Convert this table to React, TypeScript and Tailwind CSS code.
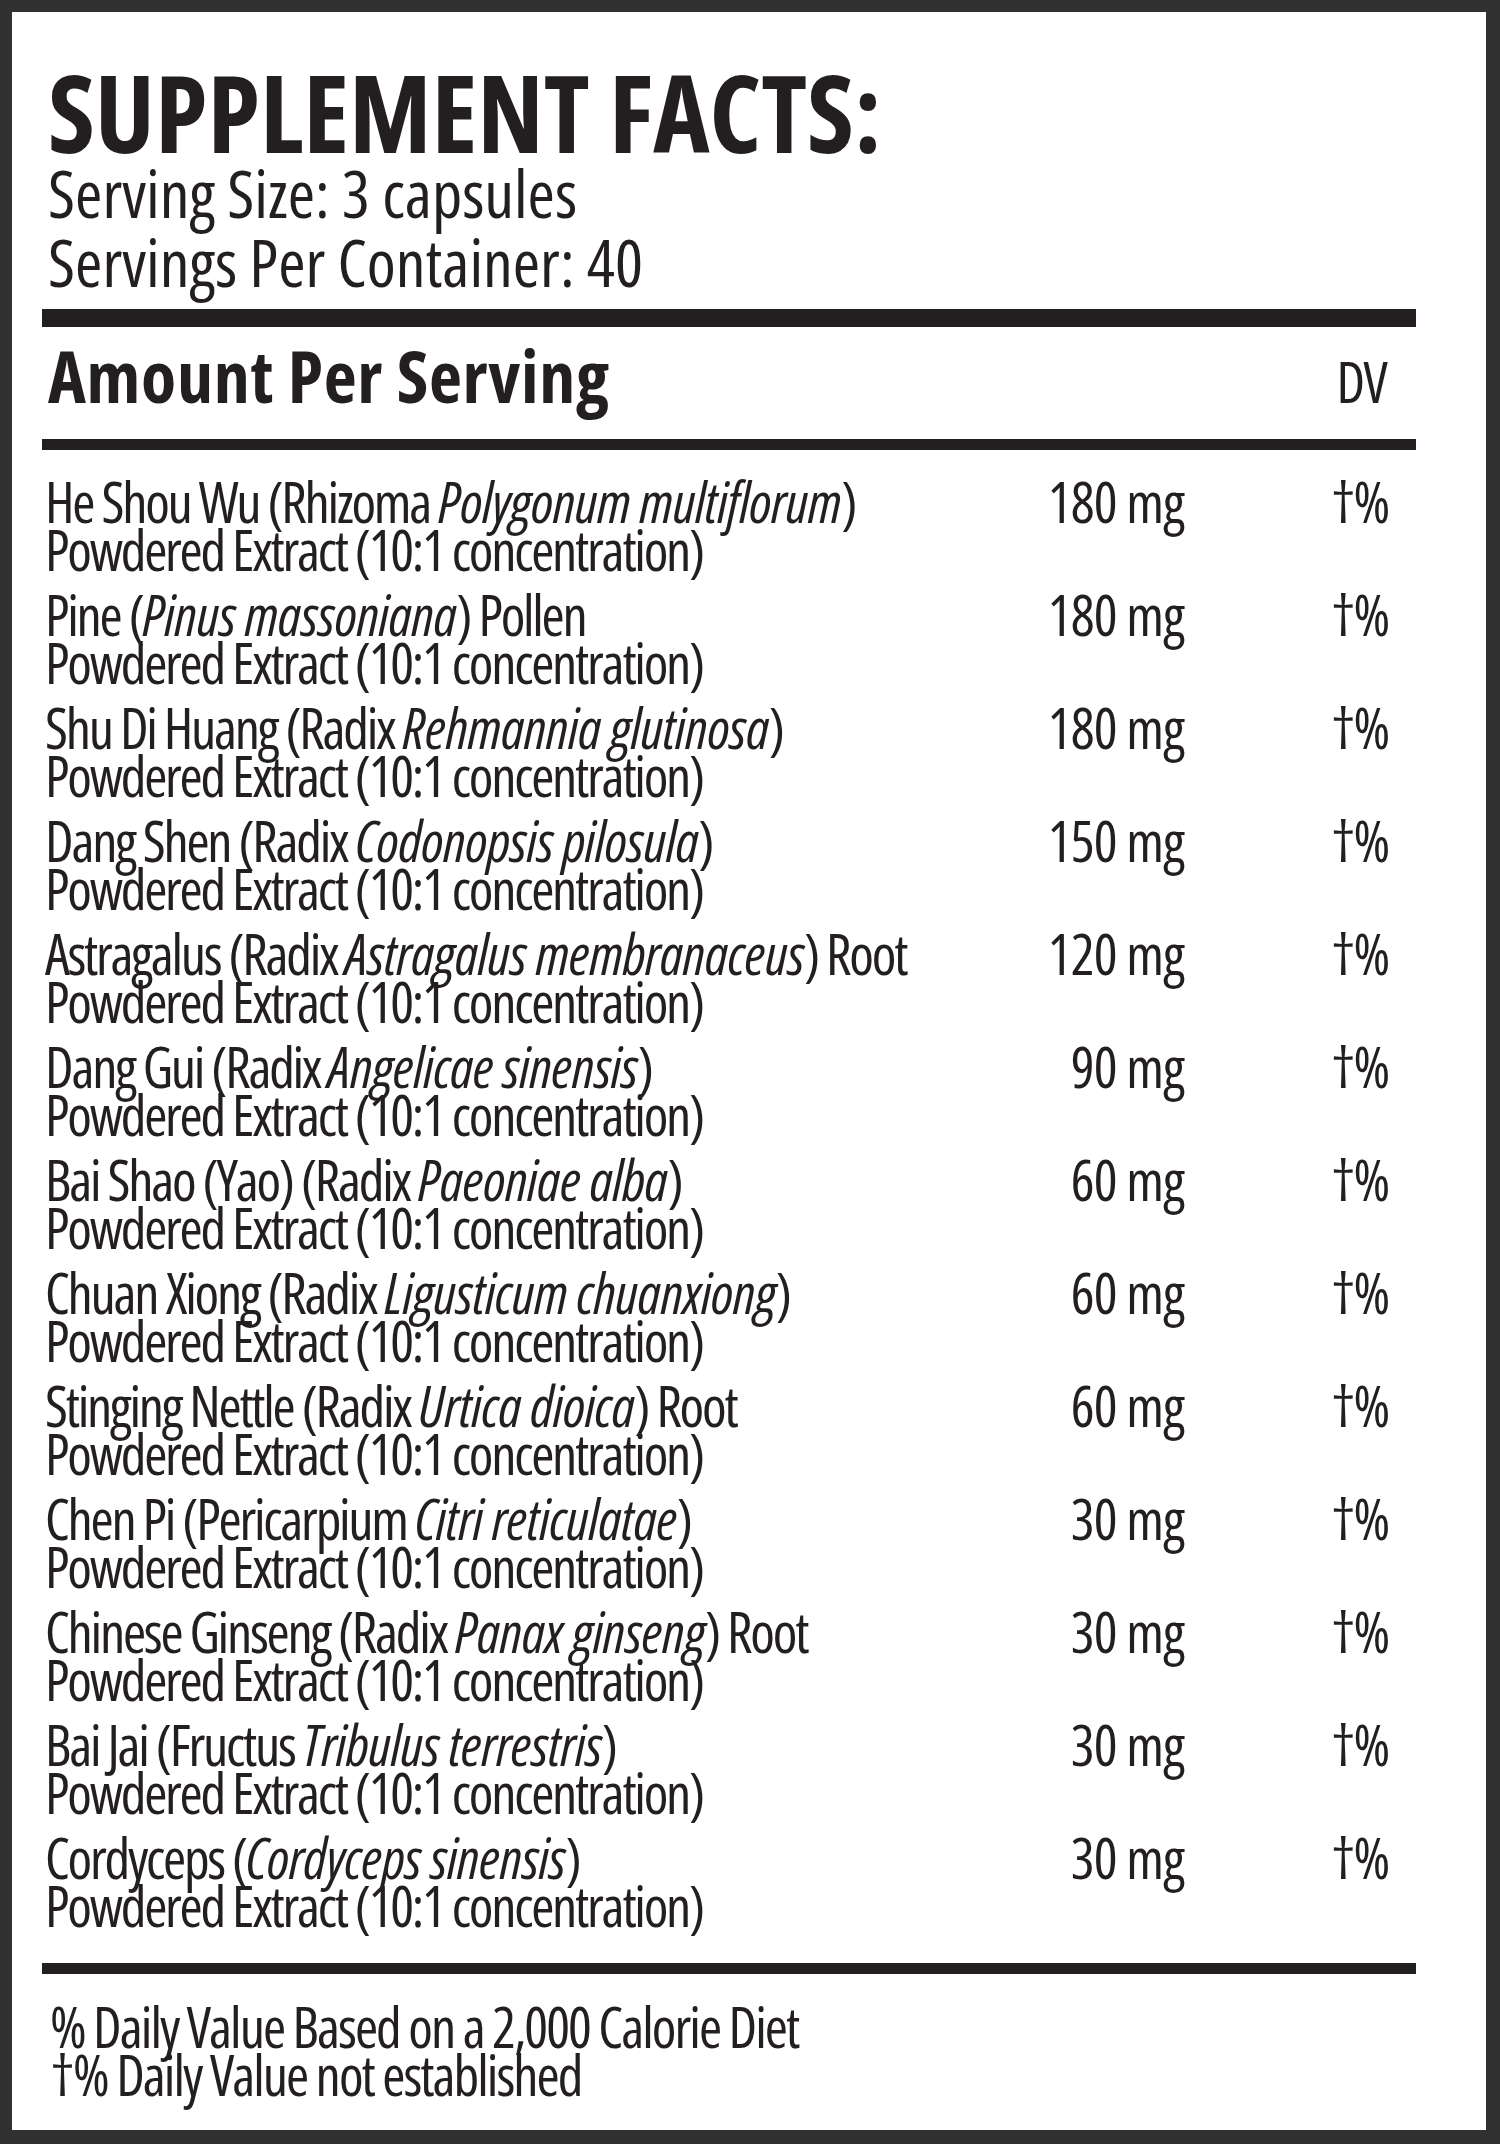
const ingredients: { pre: string; latin: string; post: string; amount: string }[] = [
  { pre: "He Shou Wu (Rhizoma ", latin: "Polygonum multiflorum", post: ")", amount: "180 mg" },
  { pre: "Pine (", latin: "Pinus massoniana", post: ") Pollen", amount: "180 mg" },
  { pre: "Shu Di Huang (Radix ", latin: "Rehmannia glutinosa", post: ")", amount: "180 mg" },
  { pre: "Dang Shen (Radix ", latin: "Codonopsis pilosula", post: ")", amount: "150 mg" },
  { pre: "Astragalus (Radix ", latin: "Astragalus membranaceus", post: ") Root", amount: "120 mg" },
  { pre: "Dang Gui (Radix ", latin: "Angelicae sinensis", post: ")", amount: "90 mg" },
  { pre: "Bai Shao (Yao) (Radix ", latin: "Paeoniae alba", post: ")", amount: "60 mg" },
  { pre: "Chuan Xiong (Radix ", latin: "Ligusticum chuanxiong", post: ")", amount: "60 mg" },
  { pre: "Stinging Nettle (Radix ", latin: "Urtica dioica", post: ") Root", amount: "60 mg" },
  { pre: "Chen Pi (Pericarpium ", latin: "Citri reticulatae", post: ")", amount: "30 mg" },
  { pre: "Chinese Ginseng (Radix ", latin: "Panax ginseng", post: ") Root", amount: "30 mg" },
  { pre: "Bai Jai (Fructus ", latin: "Tribulus terrestris", post: ")", amount: "30 mg" },
  { pre: "Cordyceps (", latin: "Cordyceps sinensis", post: ")", amount: "30 mg" },
];

const App = () => {
  return (
    <div
      className="min-h-screen flex flex-col bg-[#313131] pt-[12px] pl-[12px] pr-[14px] pb-[14px] text-[#231f20] font-stretch-[75%]"
      style={{ fontFamily: "'Open Sans', 'Noto Sans', sans-serif" }}
    >
      <div className="flex-1 bg-white pt-[60px] pl-[30px] pr-[70px]">
        {/* Header */}
        <h1 className="pl-[6px] text-[107px] leading-[80px] font-bold tracking-normal">SUPPLEMENT FACTS:</h1>
        <div className="pl-[6px] mt-[6px] text-[66px] leading-[69px] tracking-normal">
          <p>Serving Size: 3 capsules</p>
          <p>Servings Per Container: 40</p>
        </div>

        <div className="mt-[13px] h-[18px] bg-[#231f20]" />

        <div className="mt-[18px] flex items-baseline justify-between pl-[6px] pr-[30px]">
          <h2 className="text-[72px] leading-[60px] font-bold tracking-[0.01em]">Amount Per Serving</h2>
          <span className="text-[56px] leading-[60px] tracking-[-0.03em]">DV</span>
        </div>

        <div className="mt-[28px] h-[11px] bg-[#231f20]" />

        {/* Ingredient rows */}
        <div className="mt-[27px] flex flex-col gap-[17px] text-[56px] leading-[48px] tracking-[-0.04em]">
          {ingredients.map((item) => (
            <div key={item.latin} className="flex pl-[3px] pr-[28px]">
              <div className="flex-1">
                <p>
                  {item.pre}
                  <i className="tracking-[-0.01em]">{item.latin}</i>
                  {item.post}
                </p>
                <p>Powdered Extract (10:1 concentration)</p>
              </div>
              <span className="w-[170px] text-right tracking-[-0.015em]">{item.amount}</span>
              <span className="ml-[100px] w-[104px] text-right">†%</span>
            </div>
          ))}
        </div>

        <div className="mt-[34px] h-[11px] bg-[#231f20]" />

        {/* Footnotes */}
        <div className="mt-[28px] pl-[8px] text-[56px] leading-[48px] tracking-[-0.035em]">
          <p>% Daily Value Based on a 2,000 Calorie Diet</p>
          <p>†% Daily Value not established</p>
        </div>
      </div>
    </div>
  );
};

export default App;
